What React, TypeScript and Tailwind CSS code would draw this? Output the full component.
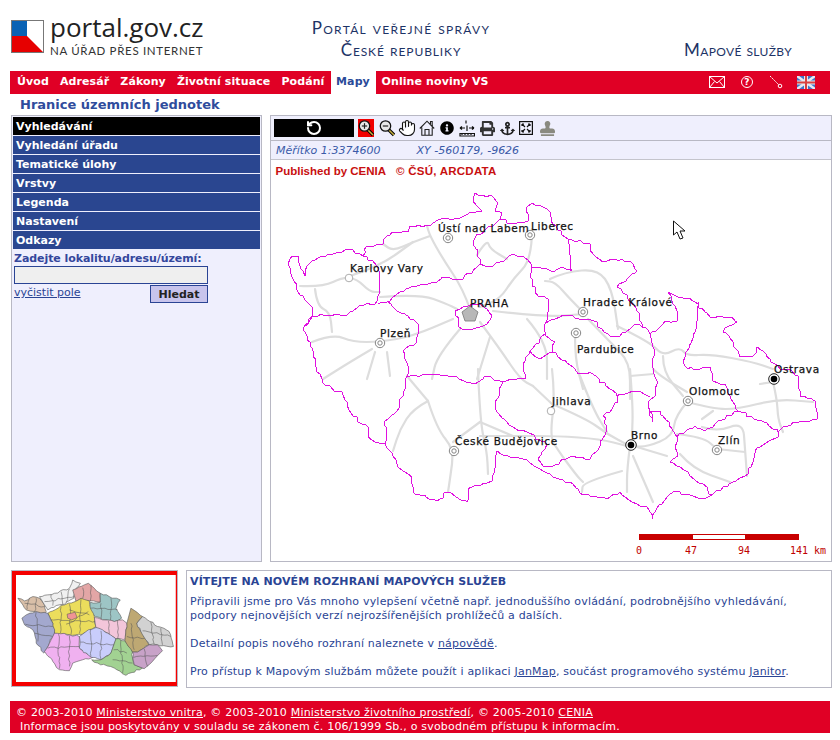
import React from "react";
import { FaAnchor, FaInfoCircle, FaPrint, FaStamp } from "react-icons/fa";
import { LuHand, LuRotateCw } from "react-icons/lu";

type P = [number, number];

const wiggle = (pts: P[], seed: number, amp = 3, step = 3.5, round = true) => {
  let s = seed * 7919 + 13;
  const r = () => {
    s = (s * 16807) % 2147483647;
    return (s % 1000) / 1000 - 0.5;
  };
  const out: string[] = [];
  pts.forEach((p, i) => {
    out.push(`${p[0]},${p[1]}`);
    const q = pts[i + 1];
    if (!q) return;
    const len = Math.hypot(q[0] - p[0], q[1] - p[1]);
    const n = Math.floor(len / step);
    for (let k = 1; k < n; k++) {
      const t = k / n;
      const x = p[0] + (q[0] - p[0]) * t + r() * amp;
      const y = p[1] + (q[1] - p[1]) * t + r() * amp;
      out.push(round ? `${Math.round(x)},${Math.round(y)}` : `${x.toFixed(1)},${y.toFixed(1)}`);
    }
  });
  return out.join(" ");
};

const smooth = (pts: P[]) => {
  if (pts.length < 3) return `M${pts[0].join(",")}L${pts[pts.length - 1].join(",")}`;
  let d = `M${pts[0].join(",")}`;
  for (let i = 1; i < pts.length - 1; i++) {
    const mx = (pts[i][0] + pts[i + 1][0]) / 2;
    const my = (pts[i][1] + pts[i + 1][1]) / 2;
    d += `Q${pts[i][0]},${pts[i][1]} ${mx},${my}`;
  }
  return d + `L${pts[pts.length - 1].join(",")}`;
};

const borders: P[][] = [
  [[288,265],[292,257],[298,257],[300,267],[305,277],[307,267],[322,257],[348,250],[363,257],[367,247],[383,245],[387,237],[397,233],[408,233],[410,227],[430,227],[438,221],[460,219],[470,213],[482,212],[473,202],[475,194],[493,198],[497,203],[495,212],[502,213],[500,220],[513,225],[528,222],[527,208],[532,204],[547,210],[550,213],[553,225],[568,240],[590,245],[593,255],[603,263],[612,260],[630,262],[637,272],[617,288],[628,300],[640,315],[642,328],[650,335],[660,328],[665,322],[677,322],[678,315],[672,302],[668,293],[695,303],[705,313],[710,318],[732,318],[737,323],[723,333],[733,343],[740,358],[753,357],[757,348],[770,360],[775,365],[798,377],[800,397],[815,402],[817,420],[793,423],[778,433],[778,438],[758,448],[753,463],[745,477],[733,483],[713,495],[702,500],[693,497],[675,492],[667,498],[655,513],[652,520],[647,508],[632,503],[620,493],[607,500],[583,496],[573,485],[553,478],[543,472],[523,460],[510,458],[497,452],[492,482],[470,488],[467,503],[448,493],[437,502],[413,493],[412,478],[398,468],[393,457],[385,445],[375,443],[368,438],[368,428],[353,417],[342,393],[325,386],[317,373],[310,343],[303,330],[313,317],[313,310],[298,293],[288,265]],
  [[303,330],[313,317],[347,316],[360,306],[375,305],[378,297],[380,293],[378,268],[363,257]],
  [[378,305],[390,302],[397,295],[413,287],[437,283],[442,278],[463,280],[480,265],[493,267],[513,255],[523,257],[532,268],[547,270],[553,273],[562,268],[572,272],[570,250],[568,240]],
  [[500,220],[493,227],[477,235],[473,245],[480,260],[480,265]],
  [[387,302],[395,310],[408,317],[418,325],[417,343],[403,352],[408,370],[407,377],[432,375],[452,377],[475,385],[488,377],[502,382],[525,380],[523,365],[530,352],[545,335]],
  [[532,268],[530,278],[538,297],[548,300],[548,313],[545,325],[560,318],[573,317],[587,320],[597,323],[598,328],[610,337],[620,337],[635,325],[642,328]],
  [[545,325],[545,333],[555,343],[552,353],[540,360],[530,352]],
  [[552,353],[573,368],[578,375],[590,373],[617,397],[633,392],[650,397]],
  [[650,335],[653,348],[652,367],[657,382],[655,397],[648,403],[650,412],[652,423],[650,412],[660,412],[672,430],[677,438],[675,448],[678,457],[670,463],[680,468],[690,477],[703,485],[712,497]],
  [[677,438],[695,427],[705,432],[718,422],[738,412],[777,430],[778,433]],
  [[698,303],[695,333],[683,363],[688,370],[710,368],[713,382],[725,385],[730,397],[738,412]],
  [[617,397],[618,403],[603,417],[607,428],[600,447],[590,460],[570,458],[553,467],[543,467],[538,460],[547,445],[527,433],[513,428],[497,413],[495,403],[503,383]],
  [[385,445],[385,422],[397,412],[405,390],[407,377]],
  [[455,312],[468,307],[480,305],[492,317],[483,327],[462,330],[455,312]],
];

const roads: P[][] = [
  [[380,298],[420,295],[447,305],[457,310]],
  [[300,287],[323,288],[343,278],[357,280],[370,293],[380,293]],
  [[315,290],[317,307],[330,313],[332,333]],
  [[312,343],[333,335],[353,343],[380,343],[413,337],[453,320]],
  [[372,350],[350,363],[323,380]],
  [[375,353],[367,380]],
  [[387,353],[390,377]],
  [[470,310],[463,290],[443,260],[430,237],[427,227]],
  [[430,237],[413,243],[393,252],[383,245]],
  [[350,277],[380,267],[413,243]],
  [[532,230],[532,260],[513,280],[500,300],[480,308]],
  [[477,256],[487,240],[490,250],[507,260]],
  [[493,312],[547,318],[583,315]],
  [[583,313],[570,300],[555,283],[545,282]],
  [[550,280],[565,273],[598,270],[612,290],[618,330]],
  [[575,337],[575,360],[583,390]],
  [[588,320],[610,343],[630,363],[630,400]],
  [[630,377],[653,375]],
  [[617,327],[650,343],[663,357],[680,348],[687,357],[710,355],[753,363],[773,370]],
  [[663,357],[663,373],[683,397]],
  [[688,402],[675,417],[673,437],[647,448],[630,447]],
  [[688,403],[713,410],[738,410],[777,400],[813,403]],
  [[773,383],[777,400],[778,420],[783,433]],
  [[773,383],[760,385]],
  [[702,420],[713,412]],
  [[702,428],[717,433],[743,423],[745,450],[747,477]],
  [[717,450],[745,453]],
  [[677,435],[703,438],[717,450]],
  [[630,447],[627,470],[627,493]],
  [[633,457],[653,503]],
  [[622,472],[583,483],[582,493]],
  [[680,455],[693,470],[730,483]],
  [[637,448],[667,457]],
  [[552,405],[587,420],[607,435],[630,447]],
  [[552,370],[555,397],[550,437],[557,450],[577,477],[583,483]],
  [[480,437],[520,437],[557,437],[600,440],[627,447]],
  [[428,402],[413,410],[400,430],[393,452]],
  [[428,402],[437,430],[454,450],[450,480],[448,493]],
  [[407,377],[428,402]],
  [[480,423],[453,443]],
  [[478,370],[480,423],[487,453],[488,475]],
  [[480,423],[513,437]],
  [[533,387],[552,405]],
  [[580,377],[593,410],[607,433]],
  [[630,370],[633,407],[632,437]],
  [[653,370],[660,377],[687,393]],
  [[480,323],[500,350],[520,380],[533,387]],
  [[460,330],[437,357],[432,380]],
  [[490,338],[477,380]],
  [[527,320],[547,343],[547,380]],
];

const labels: [string, number, number][] = [
  ["Ústí nad Labem", 438, 233],
  ["Liberec", 531, 231],
  ["Karlovy Vary", 350, 273],
  ["PRAHA", 470, 308],
  ["Hradec Králové", 583, 307],
  ["Plzeň", 380, 338],
  ["Pardubice", 577, 354],
  ["Ostrava", 774, 374],
  ["Olomouc", 689, 396],
  ["Jihlava", 552, 406],
  ["Brno", 631, 440],
  ["Zlín", 718, 445],
  ["České Budějovice", 455, 446],
];

const rings: P[] = [[448,239],[530,236],[380,344],[583,313],[576,334],[688,402],[454,452],[717,451]];
const dots: P[] = [[774,380],[631,446]];
const plain: P[] = [[349,279],[551,412]];

function MapImage() {
  return (
    <svg viewBox="271 161 560 400" className="block w-[560px] h-[400px]">
      <text y="175.5" fill="#c81010" fontFamily="'Liberation Sans', sans-serif" fontWeight="700" fontSize="11.5">
        <tspan x="275.5">Published by CENIA</tspan>
        <tspan x="396" letterSpacing="0.25">© ČSÚ, ARCDATA</tspan>
      </text>
      {roads.map((r, i) => (
        <path key={i} d={smooth(r)} fill="none" stroke="#dddddd" strokeWidth="2.2" strokeLinejoin="round" strokeLinecap="round" />
      ))}
      {borders.map((b, i) => (
        <polyline key={i} points={wiggle(b, i + 3)} fill="none" stroke="#e010e0" strokeWidth="1" strokeLinejoin="round" shapeRendering="crispEdges" />
      ))}
      <polygon points="470,307 478,313 475,322 465,322 462,313" fill="#b8b8b8" stroke="#777" strokeWidth="0.8" />
      {rings.map((p, i) => (
        <g key={i} fill="#fff" stroke="#777" strokeWidth="0.9">
          <circle cx={p[0]} cy={p[1]} r="4.7" />
          <circle cx={p[0]} cy={p[1]} r="2.2" />
        </g>
      ))}
      {plain.map((p, i) => (
        <circle key={i} cx={p[0]} cy={p[1]} r="3.8" fill="#fff" stroke="#999" strokeWidth="0.8" />
      ))}
      {dots.map((p, i) => (
        <g key={i}>
          <circle cx={p[0]} cy={p[1]} r="5.3" fill="#fff" stroke="#222" strokeWidth="1" />
          <circle cx={p[0]} cy={p[1]} r="3.3" fill="#000" />
        </g>
      ))}
      {labels.map(([t, x, y]) => (
        <text key={t} x={x} y={y} fill="#111" fontFamily="'DejaVu Sans', sans-serif" fontSize="10.5" stroke="#111" strokeWidth="0.25" letterSpacing="0.65">{t}</text>
      ))}
      <rect x="639" y="535" width="160" height="6" fill="#c80000" />
      <rect x="693" y="536" width="52" height="4" fill="#fff" />
      <g fill="#c00000" fontFamily="'DejaVu Sans Mono', monospace" fontSize="10">
        <text x="636" y="555">0</text>
        <text x="685" y="555">47</text>
        <text x="738" y="555">94</text>
        <text x="790" y="555">141 km</text>
      </g>
      <polygon points="673.5,222 673.5,236 677,233 680,240 683,239 680,232 685,232" fill="#fff" stroke="#111" strokeWidth="1" />
    </svg>
  );
}

const toP = (s: string): P[] => s.split(" ").map((c) => c.split(",").map(Number) as P);

const thumbRegions: { c: string; pts: string; lines: string[] }[] = [
  { c: "#d9bfa8", pts: "50,100 70,108 95,95 115,100 130,120 135,140 125,150 100,140 75,135 65,120", lines: ["85,100 78,133", "105,100 100,140", "70,115 130,125"] },
  { c: "#f0f0f0", pts: "115,95 160,85 205,70 215,45 238,55 225,70 218,100 190,118 165,122 140,135 130,120", lines: ["150,88 155,122", "180,80 185,118", "205,72 195,112", "130,110 220,95"] },
  { c: "#e3a6a6", pts: "215,75 262,55 280,70 298,85 298,112 265,108 240,100 225,110", lines: ["245,68 245,100", "270,60 268,108"] },
  { c: "#9dc5c5", pts: "298,85 325,95 358,105 345,130 362,160 340,170 305,165 275,150 265,130 268,112 298,112", lines: ["300,115 300,162", "330,100 328,168", "268,130 350,135"] },
  { c: "#ebdd5c", pts: "140,145 190,120 222,110 240,100 265,108 268,130 280,155 285,185 260,205 205,210 160,205 155,175", lines: ["180,125 178,205", "205,118 210,208", "240,102 235,206", "150,165 282,170", "195,178 262,140", "205,135 265,150"] },
  { c: "#a3a8ce", pts: "62,160 75,150 105,140 140,145 155,175 160,205 145,235 128,265 105,235 95,195 70,180", lines: ["105,142 110,230", "72,178 155,185", "100,205 155,215"] },
  { c: "#f0b1f0", pts: "160,205 205,210 235,215 235,250 275,278 245,285 215,295 205,318 175,315 130,260 145,235", lines: ["172,208 175,312", "205,212 205,305", "140,250 235,245"] },
  { c: "#f3c6da", pts: "280,158 305,165 340,170 365,165 378,175 375,222 345,222 320,205 285,190", lines: ["322,168 325,208", "350,168 350,222"] },
  { c: "#c9cdfb", pts: "262,195 285,188 320,205 345,222 330,265 300,285 272,278 235,250 235,215", lines: ["270,192 270,275", "300,198 300,283", "238,232 338,240"] },
  { c: "#a2d292", pts: "345,222 372,228 395,262 395,280 400,300 425,310 375,332 340,310 290,295 272,285 300,285 330,265", lines: ["338,255 378,265", "335,285 395,295", "360,225 365,325"] },
  { c: "#bea873", pts: "390,130 425,155 408,175 420,200 445,240 410,262 395,262 372,228 378,175", lines: ["390,175 400,255", "378,215 432,220"] },
  { c: "#d2d2d2", pts: "425,155 440,165 470,185 505,200 518,245 470,240 445,240 420,200 408,175", lines: ["450,172 460,238", "480,190 485,240", "425,198 510,215"] },
  { c: "#c8a2c8", pts: "445,240 470,240 485,258 455,290 430,312 400,300 395,262 410,262", lines: ["430,252 440,305", "398,278 470,272"] },
];

function Thumb() {
  return (
    <svg viewBox="45 30 480 322" className="block w-[160px] h-[107px]">
      <rect x="45" y="30" width="480" height="322" fill="#fff" />
      {thumbRegions.map((r, i) => (
        <g key={i}>
          <polygon points={wiggle(toP(r.pts), i + 5, 5, 9, false)} fill={r.c} stroke="#555" strokeWidth="1.8" strokeLinejoin="round" />
          {r.lines.map((l, j) => (
            <polyline key={j} points={wiggle(toP(l), i * 3 + j + 9, 6, 10, false)} fill="none" stroke="#555" strokeWidth="1.6" />
          ))}
        </g>
      ))}
      <polygon points="198,148 222,142 228,158 212,165 200,160" fill="#f09494" stroke="#555" strokeWidth="1.6" />
    </svg>
  );
}

function Magnifier({ minus }: { minus?: boolean }) {
  return (
    <svg viewBox="0 0 16 18" className="w-[16px] h-[18px]">
      <line x1="9.5" y1="10.5" x2="15" y2="16" stroke="#000" strokeWidth="3.4" />
      <line x1="10" y1="11" x2="15" y2="16" stroke="#c8b040" strokeWidth="1.5" />
      <circle cx="6.5" cy="7" r="5.2" fill="#e8e8e8" stroke="#111" strokeWidth="1.3" />
      <line x1="3.8" y1="7" x2="9.2" y2="7" stroke="#222" strokeWidth="1.2" />
      {!minus && <line x1="6.5" y1="4.2" x2="6.5" y2="9.8" stroke="#222" strokeWidth="1.2" />}
    </svg>
  );
}

function Toolbar() {
  return (
    <div className="h-[25px] flex items-start pt-[3px] pl-[3px] border-b border-[#b8b8c4]">
      <div className="w-[80px] h-[18px] bg-black flex items-center justify-center text-white">
        <LuRotateCw size={16} strokeWidth={3} className="-scale-x-100" />
      </div>
      <div className="ml-[4px] w-[16px] h-[18px] bg-[#f00000]"><Magnifier /></div>
      <div className="ml-[5px] w-[16px] h-[18px]"><Magnifier minus /></div>
      <div className="ml-[3px] w-[18px] h-[18px] flex items-center justify-center"><LuHand size={18} color="#111" strokeWidth={1.5} fill="#fff" /></div>
      <div className="ml-[3px] w-[16px] h-[18px]">
        <svg viewBox="0 0 16 18" className="w-[16px] h-[18px]" fill="none" stroke="#222" strokeWidth="1.1">
          <path d="M0.8 9.5L8 2.2L15.2 9.5M11.5 5V2.5H13.2V7M2.8 8.5V16.2H13.2V8.5M6 16.2V10.5H10V16.2" />
        </svg>
      </div>
      <div className="ml-[4px] w-[16px] h-[18px] flex items-center justify-center"><FaInfoCircle size={14} color="#000" /></div>
      <div className="ml-[4px] w-[16px] h-[18px]">
        <svg viewBox="0 0 16 18" className="w-[16px] h-[18px]" fill="none" stroke="#111" strokeWidth="1.2">
          <path d="M1 14.5H15.5V17H1Z M3 14.5V16 M6 14.5V16 M9 14.5V16 M12 14.5V16" />
          <path d="M7 4.5V1.5M1 9H6M1 9L3 7.5M1 9L3 10.5M10 9H15M15 9L13 7.5M15 9L13 10.5M8 6.5V12" />
        </svg>
      </div>
      <div className="ml-[4px] w-[16px] h-[18px] flex items-center justify-center"><FaPrint size={15} color="#333" /></div>
      <div className="ml-[4px] w-[16px] h-[18px] flex items-center justify-center"><FaAnchor size={15} color="#222" /></div>
      <div className="ml-[4px] w-[14px] h-[18px] flex items-center justify-center">
        <svg viewBox="0 0 14 14" className="w-[14px] h-[14px]" fill="none" stroke="#111" strokeWidth="1.2">
          <rect x="0.6" y="0.6" width="12.8" height="12.8" />
          <path d="M3 3L6 6M3 3H5M3 3V5M11 3L8 6M11 3H9M11 3V5M3 11L6 8M3 11H5M3 11V9M11 11L8 8M11 11H9M11 11V9" />
        </svg>
      </div>
      <div className="ml-[6px] w-[16px] h-[18px] flex items-center justify-center"><FaStamp size={15} color="#8a8a80" /></div>
    </div>
  );
}

const menu = ["Vyhledání úřadu", "Tematické úlohy", "Vrstvy", "Legenda", "Nastavení", "Odkazy"];
const nav = ["Úvod", "Adresář", "Zákony", "Životní situace", "Podání"];

export default function App() {
  const dv = "font-['DejaVu_Sans',sans-serif]";
  return (
    <div className={`w-[840px] h-[740px] bg-white overflow-hidden ${dv} text-[11px] text-[#2a4494]`}>
      <header className="h-[71px] flex pl-[11px]">
        <svg viewBox="0 0 33 33" className="w-[33px] h-[33px] mt-[20px] shrink-0">
          <rect width="33" height="33" fill="#fff" />
          <rect width="16" height="17" fill="#0a62b4" />
          <polygon points="0,16 16,16 33,33 0,33" fill="#e60000" />
          <rect x="0.5" y="0.5" width="32" height="32" fill="none" stroke="#777" />
        </svg>
        <div className="ml-[6px] w-[230px] pt-[10px]">
          <div className="text-[26px] leading-[35px] text-[#222] font-['Open_Sans',sans-serif]">portal.gov.cz</div>
          <div className="text-[11.5px] leading-[14px] mt-[-1px] text-[#333] font-['Lato',sans-serif] tracking-[0.67px]">NA ÚŘAD PŘES INTERNET</div>
        </div>
        <div className="w-[250px] ml-[-4px] pt-[17px] text-center text-[#1d3366] font-['Lato',sans-serif] text-[17px] leading-[22px] [font-variant:small-caps] tracking-[1.3px]">
          <div>Portál veřejné správy</div>
          <div className="tracking-[0.9px]">České republiky</div>
        </div>
        <div className="ml-[158px] pt-[39px] text-[#1d3366] font-['Lato',sans-serif] text-[17px] leading-[22px] [font-variant:small-caps] tracking-[0.37px] whitespace-nowrap">Mapové služby</div>
      </header>

      <nav className="ml-[10px] w-[820px] h-[23px] bg-[#e00025] flex font-bold text-white text-[11px] tracking-[0.1px]">
        <div className="flex pl-[7px] gap-[11px] items-center pb-[1px]">
          {nav.map((n) => <span key={n}>{n}</span>)}
        </div>
        <div className="ml-[6px] w-[45px] bg-white text-[#2a4a98] flex items-center justify-center pb-[1px]">Mapy</div>
        <div className="ml-[6px] flex items-center pb-[1px]">Online noviny VS</div>
        <div className="ml-auto flex items-center pr-[15px] pb-[1px]">
          <svg viewBox="0 0 16 12" className="w-[16px] h-[12px]" fill="none" stroke="#fff" strokeWidth="1">
            <rect x="0.5" y="0.5" width="15" height="11" />
            <path d="M0.5 0.5L8 7L15.5 0.5M0.5 11.5L5.5 5.5M15.5 11.5L10.5 5.5" />
          </svg>
          <span className="ml-[16px] w-[12px] h-[12px] rounded-full border border-white text-[9px] leading-[10px] text-center">?</span>
          <svg viewBox="0 0 14 14" className="ml-[16px] w-[14px] h-[14px]" fill="none" stroke="#fff" strokeWidth="1">
            <path d="M1 1L10 10" strokeDasharray="2 1" />
            <circle cx="11" cy="11" r="1.8" />
          </svg>
          <svg viewBox="0 0 18 13" className="ml-[14px] w-[18px] h-[13px]">
            <rect width="18" height="13" fill="#3f73c8" />
            <path d="M0 0L18 13M18 0L0 13" stroke="#e8e8f0" strokeWidth="2.5" />
            <path d="M9 0V13M0 6.5H18" stroke="#e8e8f0" strokeWidth="4" />
            <path d="M9 0V13M0 6.5H18" stroke="#d84040" strokeWidth="2" />
          </svg>
        </div>
      </nav>

      <h1 className="h-[21px] pl-[20px] pt-[3px] text-[13px] leading-[16px] font-bold text-[#2f4c9c]">Hranice územních jednotek</h1>

      <div className="flex pl-[11px] h-[447px]">
        <aside className="w-[251px] bg-[#efeffd] border border-[#b8b8c4] p-[1px] text-[11px]">
          <div className="h-[18px] mb-[1px] bg-black text-white font-bold pl-[3px] leading-[19px]">Vyhledávání</div>
          {menu.map((m) => (
            <div key={m} className="h-[18px] mb-[1px] bg-[#2a4690] text-white font-bold pl-[3px] leading-[19px]">{m}</div>
          ))}
          <div className="pl-[1px] font-bold leading-[14px] pt-[2px] text-[#34469c] tracking-[-0.07px]">Zadejte lokalitu/adresu/území:</div>
          <div className="ml-[1px] w-[194px] h-[18px] bg-[#efefef] border border-[#2a4494]" />
          <div className="flex items-start ml-[1px] w-[194px]">
            <a className="underline leading-[14px] mt-[2px]">vyčistit pole</a>
            <button className="ml-auto w-[58px] h-[18px] mt-[1px] bg-[#c8c4ec] border border-[#2a4494] font-bold text-[#222] text-[11px] leading-[15px]">Hledat</button>
          </div>
        </aside>

        <main className="ml-[8px] w-[562px] border border-[#b8b8c4] bg-white">
          <div className="bg-[#efeffd]">
            <Toolbar />
            <div className="h-[19px] pl-[5px] pt-[2px] flex items-center italic text-[11px] text-[#3a5aa8] border-b border-[#c4c4cc]">
              <span>Měřítko 1:3374600</span>
              <span className="ml-[36px]">XY -560179, -9626</span>
            </div>
          </div>
          <MapImage />
        </main>
      </div>

      <div className="flex pl-[11px] mt-[8px] h-[118px]">
        <div className="w-[167px] h-[117px] border border-[#b8b8c4]">
          <div className="border-[4px] border-[#f40000] w-[165px] h-[115px]"><Thumb /></div>
        </div>
        <section className="ml-[8px] w-[646px] border border-[#b8b8c4] pl-[3px] pt-[4px] leading-[14px] tracking-[0.2px]">
          <h2 className="font-bold text-[#2a4494] mb-[6px] tracking-[0.12px]">VÍTEJTE NA NOVÉM ROZHRANÍ MAPOVÝCH SLUŽEB</h2>
          <p>Připravili jsme pro Vás mnoho vylepšení včetně např. jednoduššího ovládání, podrobnějšího vyhledávání,<br />podpory nejnovějších verzí nejrozšířenějších prohlížečů a dalších.</p>
          <p className="mt-[14px]">Detailní popis nového rozhraní naleznete v <a className="underline">nápovědě</a>.</p>
          <p className="mt-[14px]">Pro přístup k Mapovým službám můžete použít i aplikaci <a className="underline">JanMap</a>, součást programového systému <a className="underline">Janitor</a>.</p>
        </section>
      </div>

      <footer className="ml-[10px] mt-[13px] w-[820px] h-[32px] bg-[#e00025] text-white leading-[14px] pl-[6px] pt-[5px] tracking-[0.2px]">
        <div>© 2003-2010 <a className="underline">Ministerstvo vnitra</a>, © 2003-2010 <a className="underline">Ministerstvo životního prostředí</a>, © 2005-2010 <a className="underline">CENIA</a></div>
        <div className="pl-[4px]">Informace jsou poskytovány v souladu se zákonem č. 106/1999 Sb., o svobodném přístupu k informacím.</div>
      </footer>
    </div>
  );
}
